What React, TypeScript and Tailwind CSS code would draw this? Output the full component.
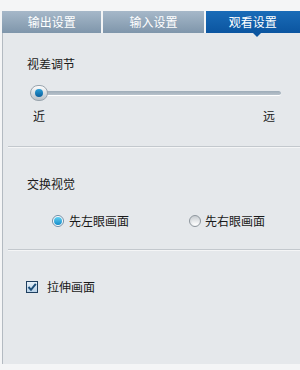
import React from "react";

const font = { fontFamily: '"Noto Sans CJK SC", "Noto Sans", sans-serif' };

function Tab({ label, active, w }: { label: string; active?: boolean; w: string }) {
  return (
    <div
      className={`relative h-[22px] ${w} flex items-center justify-center text-[12px] leading-none text-white ${
        active
          ? "bg-gradient-to-b from-[#1a6cb8] to-[#0b55a0]"
          : "bg-gradient-to-b from-[#a6b8c9] to-[#7f96ab]"
      }`}
    >
      {label}
      {active && (
        <div className="absolute left-[47px] top-[22px] w-0 h-0 border-l-[4px] border-r-[4px] border-t-[4px] border-l-transparent border-r-transparent border-t-[#0b55a0]" />
      )}
    </div>
  );
}

export default function App() {
  return (
    <div className="w-[300px] h-[370px] bg-[#f4f5f6] overflow-hidden text-[#1a1a1a]" style={font}>
      <div className="h-[11px]" />
      <div className="flex pl-[2px] gap-[2px] h-[22px]">
        <Tab label="输出设置" w="w-[100px]" />
        <Tab label="输入设置" w="w-[101px]" />
        <Tab label="观看设置" w="w-[95px]" active />
      </div>
      <div className="ml-[2px] h-[331px] border-l border-[#b3bac1] bg-[#e5e8eb] flex flex-col">
        <div className="pl-[24px] mt-[23px] text-[12px] leading-[16px]">视差调节</div>
        <div className="relative mt-[14px] h-[14px] ml-[27px] w-[251px] flex items-center">
          <div className="w-full h-[5px] rounded-full bg-gradient-to-b from-[#9eacb8] to-[#b9c3cc] border-b border-white" />
          <div className="absolute left-0 top-[-1px] w-[18px] h-[16px] rounded-full bg-gradient-to-b from-[#fdfdfd] to-[#b8c0c7] border border-[#9aa5ae] flex items-center justify-center">
            <div className="w-[8px] h-[8px] rounded-full bg-gradient-to-b from-[#2a9fd8] to-[#0b5f9c]" />
          </div>
        </div>
        <div className="mt-[8px] ml-[30px] w-[242px] flex justify-between text-[12px] leading-[16px]">
          <span>近</span>
          <span>远</span>
        </div>
        <div className="mt-[22px] ml-[5px] h-[2px] border-t border-[#c3c8cd] border-b border-b-[#f4f5f6]" />
        <div className="pl-[24px] mt-[28px] text-[12px] leading-[16px]">交换视觉</div>
        <div className="mt-[21px] h-[16px] flex items-center text-[12px] leading-[16px]">
          <div className="ml-[49px] w-[12px] h-[12px] rounded-full border border-[#6f8da6] bg-white flex items-center justify-center">
            <div className="w-[8px] h-[8px] rounded-full bg-gradient-to-b from-[#5fd0f2] to-[#0d8cc9]" />
          </div>
          <span className="ml-[5px]">先左眼画面</span>
          <div className="ml-[60px] w-[12px] h-[12px] rounded-full border border-[#8e969d] bg-gradient-to-b from-[#c9ced2] to-[#f7f8f9] flex items-center justify-center">
            <div className="w-[7px] h-[7px] rounded-full bg-gradient-to-b from-[#d4d8db] to-[#ffffff]" />
          </div>
          <span className="ml-[4px]">先右眼画面</span>
        </div>
        <div className="mt-[20px] ml-[5px] h-[2px] border-t border-[#c3c8cd] border-b border-b-[#f4f5f6]" />
        <div className="mt-[28px] h-[16px] flex items-center text-[12px] leading-[16px]">
          <div className="ml-[23px] w-[12px] h-[12px] border border-[#1f3f5f] bg-gradient-to-b from-[#e6f0f8] to-[#b9d2e8] flex items-center justify-center">
            <svg width="10" height="10" viewBox="0 0 10 10">
              <path d="M1.5 5 L4 7.8 L8.8 1.8" stroke="#1d4f7a" strokeWidth="2" fill="none" />
            </svg>
          </div>
          <span className="ml-[9px]">拉伸画面</span>
        </div>
      </div>
    </div>
  );
}
